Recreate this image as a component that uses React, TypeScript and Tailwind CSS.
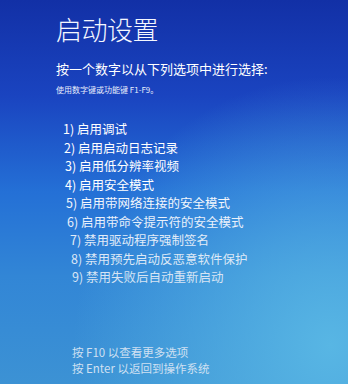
import React, { FC } from 'react';

// Windows "startup settings" screen, photographed off a monitor
const options: { label: string; indent: number; fade: string }[] = [
  { label: '1) 启用调试', indent: 7, fade: 'text-white' },
  { label: '2) 启用启动日志记录', indent: 8, fade: 'text-white' },
  { label: '3) 启用低分辨率视频', indent: 9, fade: 'text-white' },
  { label: '4) 启用安全模式', indent: 9, fade: 'text-white' },
  { label: '5) 启用带网络连接的安全模式', indent: 10, fade: 'text-[#f2f6fc]' },
  { label: '6) 启用带命令提示符的安全模式', indent: 11, fade: 'text-[#eaf1fb]' },
  { label: '7) 禁用驱动程序强制签名', indent: 14, fade: 'text-[#e2ecf8]' },
  { label: '8) 禁用预先启动反恶意软件保护', indent: 15, fade: 'text-[#dce8f6]' },
  { label: '9) 禁用失败后自动重新启动', indent: 16, fade: 'text-[#d6e4f4]' },
];

const App: FC = () => {
  return (
    <div
      className="relative w-[348px] h-[384px] overflow-hidden text-white bg-[radial-gradient(ellipse_at_95%_90%,#58b6e4_0%,rgba(88,182,228,0)_55%),linear-gradient(180deg,#1230a6_0%,#1a44c0_25%,#2470d6_50%,#3286d6_72%,#3c92d4_100%)]"
      style={{ fontFamily: '"Noto Sans CJK SC", "Noto Sans", sans-serif' }}
    >
      <div className="flex flex-col pl-[56px]">
        <div className="pt-[16px] text-[26px] font-light leading-none tracking-[-0.5px] text-[#f4f7ff]">启动设置</div>
        <div className="mt-[20px] text-[13px] leading-[13px] text-white">按一个数字以从下列选项中进行选择:</div>
        <div className="mt-[11px] text-[8px] leading-[8px] text-[#e8eefc]">使用数字键或功能键 F1-F9。</div>

        <ul className="mt-[26px] flex flex-col">
          {options.map((o) => (
            <li
              key={o.label}
              className={`text-[12.5px] leading-[18.5px] ${o.fade}`}
              style={{ paddingLeft: o.indent }}
            >
              {o.label}
            </li>
          ))}
        </ul>

        <div className="mt-[57px] flex flex-col pl-[16px] text-[11.5px] leading-[16px] text-[#cfe0f2]">
          <div>按 F10 以查看更多选项</div>
          <div>按 Enter 以返回到操作系统</div>
        </div>
      </div>
    </div>
  );
};

export default App;
